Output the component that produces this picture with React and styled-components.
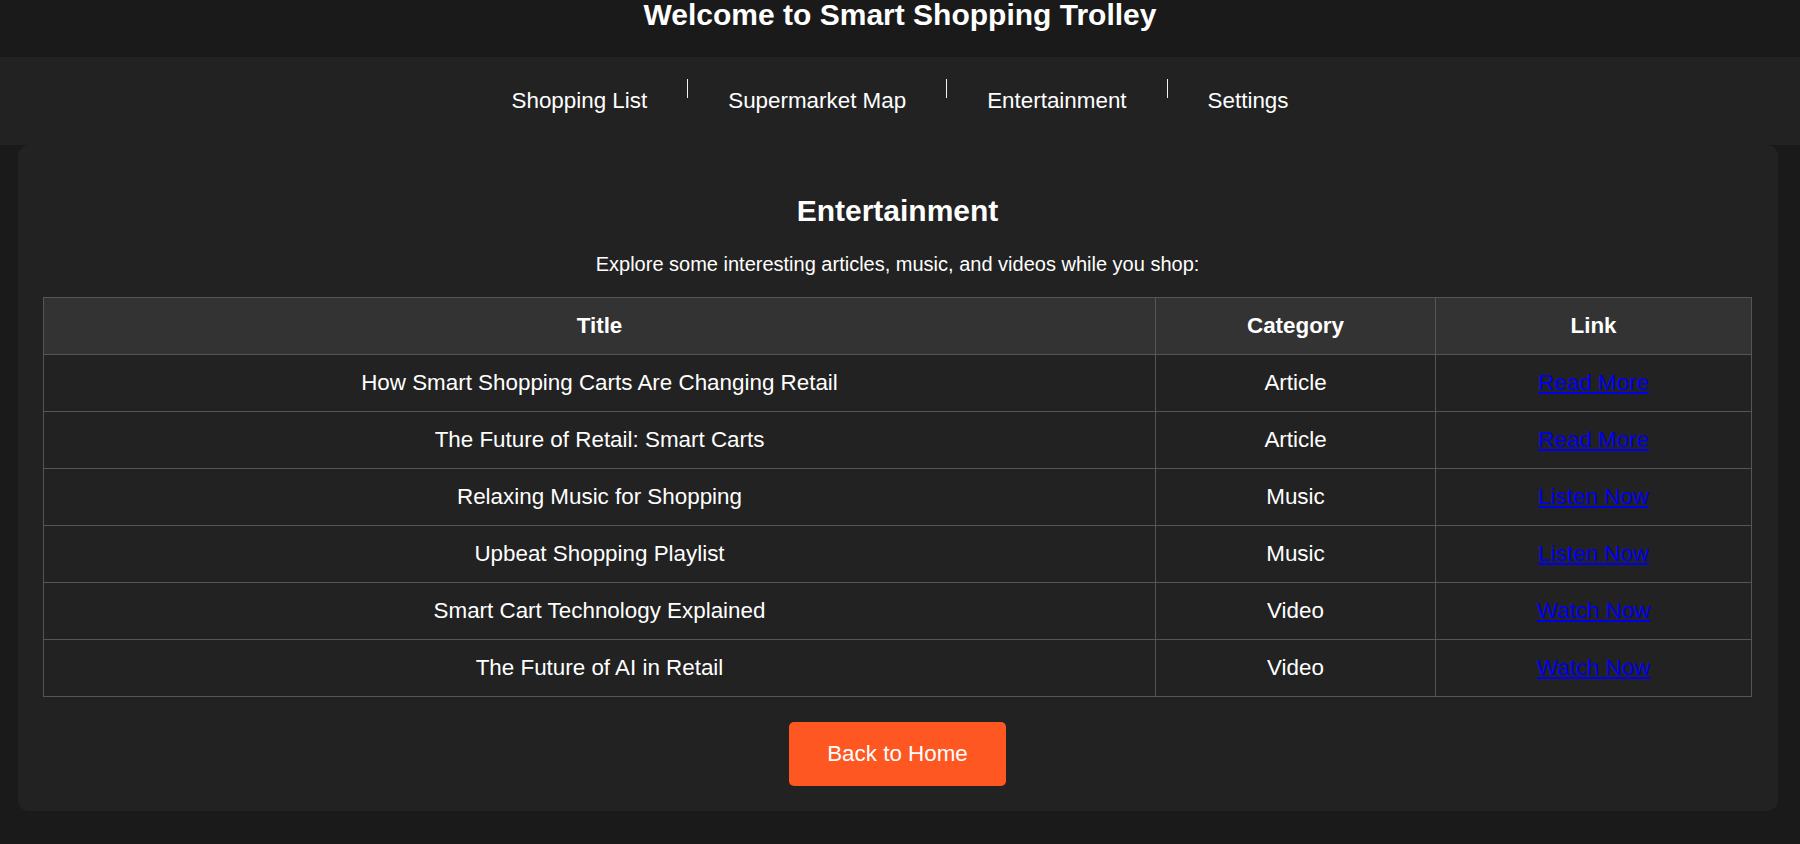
import React from 'react';
import styled, { createGlobalStyle } from 'styled-components';

const GlobalStyle = createGlobalStyle`
    body {
        margin: 0;
        background: #1a1a1a;
        color: #fff;
        font-family: "Liberation Sans", Arial, sans-serif;
    }
`;

const items = [
    { title: 'How Smart Shopping Carts Are Changing Retail', category: 'Article', link: 'Read More' },
    { title: 'The Future of Retail: Smart Carts', category: 'Article', link: 'Read More' },
    { title: 'Relaxing Music for Shopping', category: 'Music', link: 'Listen Now' },
    { title: 'Upbeat Shopping Playlist', category: 'Music', link: 'Listen Now' },
    { title: 'Smart Cart Technology Explained', category: 'Video', link: 'Watch Now' },
    { title: 'The Future of AI in Retail', category: 'Video', link: 'Watch Now' },
];

const menu = ['Shopping List', 'Supermarket Map', 'Entertainment', 'Settings'];

const App = () => {
    return (
        <>
            <GlobalStyle />
            <Header>
                <h1>Welcome to Smart Shopping Trolley</h1>
            </Header>
            <Nav>
                <NavList>
                    {menu.map((label, i) => (
                        <React.Fragment key={label}>
                            {i > 0 && <Separator />}
                            <NavLink href="#">{label}</NavLink>
                        </React.Fragment>
                    ))}
                </NavList>
            </Nav>
            <Card>
                <h2 className="title">Entertainment</h2>
                <p className="text">Explore some interesting articles, music, and videos while you shop:</p>
                <Table>
                    <colgroup>
                        <col style={{ width: '1112px' }} />
                        <col style={{ width: '280px' }} />
                        <col />
                    </colgroup>
                    <thead>
                        <tr>
                            <th>Title</th>
                            <th>Category</th>
                            <th>Link</th>
                        </tr>
                    </thead>
                    <tbody>
                        {items.map((item) => (
                            <tr key={item.title}>
                                <td>{item.title}</td>
                                <td>{item.category}</td>
                                <td><a href="#">{item.link}</a></td>
                            </tr>
                        ))}
                    </tbody>
                </Table>
                <Button type="button">Back to Home</Button>
            </Card>
        </>
    );
};
export default App;

const Header = styled.header`
    background: #1a1a1a;
    text-align: center;
    padding: 0 0 27px;
    h1 {
        margin: 0;
        font-size: 30px;
        line-height: 30px;
        font-weight: 700;
        color: #fff;
    }
`;

const Nav = styled.nav`
    background: #222;
    padding: 22px 0 31px;
`;

const NavList = styled.div`
    display: flex;
    justify-content: center;
    align-items: flex-start;
`;

const NavLink = styled.a`
    padding-top: 9px;
    font-size: 22.4px;
    line-height: 26px;
    color: #fff;
    text-decoration: none;
`;

const Separator = styled.span`
    width: 1px;
    height: 19px;
    background: #f2f2f2;
    margin: 0 40px;
`;

const Card = styled.section`
    background: #222;
    border-radius: 11px;
    margin: 0 22px 0 18px;
    padding: 25px 26px 25px 25px;
    text-align: center;
    .title {
        margin: 24px 0 25px;
        font-size: 30px;
        line-height: 34px;
        font-weight: 700;
    }
    .text {
        margin: 0 0 21px;
        font-size: 20px;
        line-height: 23px;
    }
`;

const Table = styled.table`
    width: 100%;
    border-collapse: collapse;
    table-layout: fixed;
    font-size: 22.4px;
    th, td {
        border: 1px solid #555;
        padding: 15px;
        text-align: center;
        line-height: normal;
    }
    th {
        background: #333;
        font-weight: 700;
    }
    a {
        color: #0000ee;
        text-decoration: underline;
    }
`;

const Button = styled.button`
    margin-top: 25px;
    padding: 19px 38px;
    background: #ff5722;
    color: #fff;
    border: none;
    border-radius: 5px;
    font-family: "Liberation Sans", Arial, sans-serif;
    font-size: 22.4px;
    line-height: normal;
    cursor: pointer;
`;
